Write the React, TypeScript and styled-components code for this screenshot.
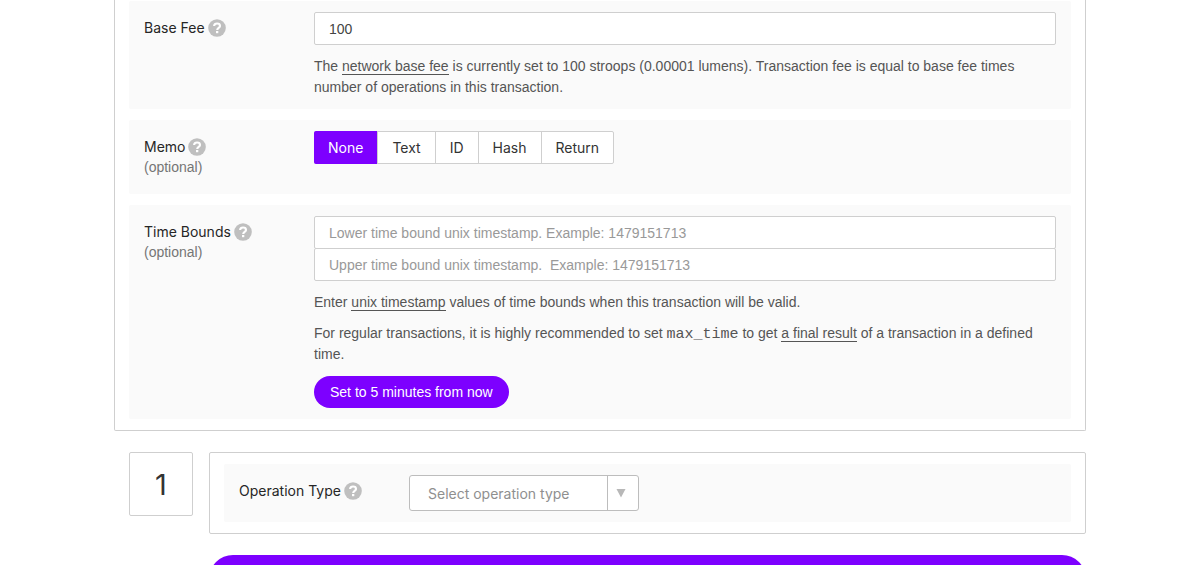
import React, { useState } from "react";
import styled, { createGlobalStyle } from "styled-components";

const color = {
  accent: "#7d00ff",
  border: "#cfcfcf",
  borderStrong: "#bdbdbd",
  row: "#fafafa",
  text: "#262626",
  help: "#555555",
  muted: "#757575",
  placeholder: "#999999",
  icon: "#bfbfbf",
};

const uiFont = `Inter, "Liberation Sans", sans-serif`;

const GlobalStyle = createGlobalStyle`
  *, *::before, *::after { box-sizing: border-box; }
  body {
    margin: 0;
    background: #fff;
    color: ${color.text};
    font-family: "Liberation Sans", Arial, sans-serif;
    font-size: 14px;
    line-height: 21px;
  }
  button, input, select { font: inherit; }
`;

const Page = styled.main`
  height: 100vh;
  overflow: hidden;
`;

const Container = styled.div`
  max-width: 972px;
  margin: 0 auto;
`;

const Panel = styled.section<{ $continued?: boolean }>`
  flex: 1;
  display: flex;
  flex-direction: column;
  gap: 11px;
  padding: ${(p) => (p.$continued ? "1px 14px 11px" : "11px 14px")};
  border: 1px solid ${color.border};
  border-top-width: ${(p) => (p.$continued ? 0 : 1)}px;
  border-radius: ${(p) => (p.$continued ? "0 0 2px 2px" : "2px")};
`;

const Row = styled.div`
  display: flex;
  padding: 11px 15px;
  border-radius: 2px;
  background: ${color.row};
`;

const LabelCell = styled.div`
  flex: 0 0 170px;
  padding: 5px 0;
`;

const LabelLine = styled.div`
  display: flex;
  align-items: center;
  gap: 3px;
  font-family: ${uiFont};
`;

const Optional = styled.div`
  color: ${color.muted};
`;

const Content = styled.div`
  flex: 1;
  min-width: 0;
`;

const HelpButton = styled.button`
  display: flex;
  padding: 0;
  border: 0;
  background: none;
  cursor: pointer;
`;

const TextInput = styled.input`
  display: block;
  width: 100%;
  height: 33px;
  padding: 0 14px;
  border: 1px solid ${color.border};
  border-radius: 2px;
  background: #fff;
  color: #444;
  & + & { margin-top: -1px; }
  &::placeholder { color: ${color.placeholder}; opacity: 1; }
`;

const HelpText = styled.p`
  margin: 11px 0 0;
  color: ${color.help};
  & + & { margin-top: 10px; }
`;

const TextLink = styled.a`
  color: inherit;
  text-decoration: none;
  border-bottom: 1px solid currentColor;
`;

const Code = styled.code`
  font-family: "Liberation Mono", monospace;
  font-size: 15px;
  line-height: 1;
`;

const Segments = styled.div`
  display: inline-flex;
  height: 33px;
  border: 1px solid ${color.border};
  border-radius: 2px;
  background: #fff;
  font-family: ${uiFont};
`;

const Segment = styled.button<{ $active: boolean }>`
  margin: ${(p) => (p.$active ? "-1px 0 -1px -1px" : "0")};
  padding: 0 14px;
  border: 0;
  border-radius: ${(p) => (p.$active ? "2px 0 0 2px" : "0")};
  background: ${(p) => (p.$active ? color.accent : "transparent")};
  color: ${(p) => (p.$active ? "#fff" : "#333")};
  cursor: pointer;
  & + & { border-left: 1px solid ${color.border}; }
`;

const PillButton = styled.button`
  display: block;
  height: 32px;
  margin-top: 11px;
  padding: 0 16px;
  border: 0;
  border-radius: 16px;
  background: ${color.accent};
  color: #fff;
  cursor: pointer;
`;

const Operation = styled.div`
  display: flex;
  align-items: flex-start;
  gap: 16px;
  margin: 21px 0 21px 15px;
`;

const OperationNumber = styled.div`
  display: flex;
  align-items: center;
  justify-content: center;
  width: 64px;
  height: 64px;
  border: 1px solid ${color.border};
  border-radius: 2px;
  color: #333;
  font-family: ${uiFont};
  font-size: 29px;
`;

const SelectBox = styled.div`
  display: grid;
  grid-template-columns: 1fr 31px;
  width: 230px;
  height: 36px;
  border: 1px solid ${color.borderStrong};
  border-radius: 3px;
  background: #fff;
  font-family: ${uiFont};
`;

const Select = styled.select`
  grid-area: 1 / 1 / 2 / 3;
  padding: 0 46px 0 18px;
  border: 0;
  background: none;
  color: #8f8f8f;
  appearance: none;
`;

const SelectArrow = styled.span`
  grid-area: 1 / 2 / 2 / 3;
  display: flex;
  align-items: center;
  padding-left: 8px;
  border-left: 1px solid ${color.borderStrong};
  pointer-events: none;
`;

const AddBar = styled.div`
  display: flex;
  padding-left: 95px;
`;

const AddButton = styled.button`
  flex: 1;
  height: 48px;
  border: 0;
  border-radius: 24px;
  background: ${color.accent};
  cursor: pointer;
`;

function Help({ topic }: { topic: string }) {
  return (
    <HelpButton type="button" aria-label={`Help: ${topic}`}>
      <svg width="18" height="18" viewBox="0 0 18 18" aria-hidden="true">
        <circle cx="9" cy="9" r="8.8" fill={color.icon} />
        <path
          d="M6.100 7.100C6.100 5.400 7.300 4.500 9 4.500c1.800 0 3 .9 3 2.400 0 1.900-2.800 2-2.800 4"
          fill="none"
          stroke="#fff"
          strokeWidth="2.100"
        />
        <rect x="8" y="12" width="2.300" height="2.200" fill="#fff" />
      </svg>
    </HelpButton>
  );
}

function FieldLabel({ text, htmlFor, optional }: { text: string; htmlFor: string; optional?: boolean }) {
  return (
    <LabelCell>
      <LabelLine>
        <label htmlFor={htmlFor}>{text}</label>
        <Help topic={text} />
      </LabelLine>
      {optional && <Optional>(optional)</Optional>}
    </LabelCell>
  );
}

const memoTypes = ["None", "Text", "ID", "Hash", "Return"];

export default function App() {
  const [fee, setFee] = useState("100");
  const [memo, setMemo] = useState("None");
  const [lower, setLower] = useState("");
  const [upper, setUpper] = useState("");

  const setFiveMinutes = () => {
    setLower("0");
    setUpper(String(Math.floor(Date.now() / 1000) + 300));
  };

  return (
    <Page>
      <GlobalStyle />
      <Container>
        <Panel $continued>
          <Row>
            <FieldLabel text="Base Fee" htmlFor="base-fee" />
            <Content>
              <TextInput id="base-fee" value={fee} onChange={(e) => setFee(e.target.value)} />
              <HelpText>
                The <TextLink href="#fees">network base fee</TextLink> is currently set to 100 stroops (0.00001
                lumens). Transaction fee is equal to base fee times number of operations in this transaction.
              </HelpText>
            </Content>
          </Row>
          <Row>
            <FieldLabel text="Memo" htmlFor="memo-None" optional />
            <Content>
              <Segments role="group" aria-label="Memo">
                {memoTypes.map((type) => (
                  <Segment
                    key={type}
                    id={`memo-${type}`}
                    type="button"
                    $active={memo === type}
                    aria-pressed={memo === type}
                    onClick={() => setMemo(type)}
                  >
                    {type}
                  </Segment>
                ))}
              </Segments>
            </Content>
          </Row>
          <Row>
            <FieldLabel text="Time Bounds" htmlFor="lower-bound" optional />
            <Content>
              <TextInput
                id="lower-bound"
                aria-label="Lower time bound"
                placeholder="Lower time bound unix timestamp. Example: 1479151713"
                value={lower}
                onChange={(e) => setLower(e.target.value)}
              />
              <TextInput
                aria-label="Upper time bound"
                placeholder="Upper time bound unix timestamp.  Example: 1479151713"
                value={upper}
                onChange={(e) => setUpper(e.target.value)}
              />
              <HelpText>
                Enter <TextLink href="#timestamp">unix timestamp</TextLink> values of time bounds when this
                transaction will be valid.
              </HelpText>
              <HelpText>
                For regular transactions, it is highly recommended to set <Code>max_time</Code> to get{" "}
                <TextLink href="#result">a final result</TextLink> of a transaction in a defined time.
              </HelpText>
              <PillButton type="button" onClick={setFiveMinutes}>
                Set to 5 minutes from now
              </PillButton>
            </Content>
          </Row>
        </Panel>
        <Operation>
          <OperationNumber>1</OperationNumber>
          <Panel>
            <Row>
              <FieldLabel text="Operation Type" htmlFor="operation-type" />
              <SelectBox>
                <Select id="operation-type" defaultValue="">
                  <option value="">Select operation type</option>
                  <option value="createAccount">Create Account</option>
                  <option value="payment">Payment</option>
                </Select>
                <SelectArrow>
                  <svg width="10" height="10" viewBox="0 0 10 10" aria-hidden="true">
                    <path d="M0.500 1h9L5 9.500z" fill="#b8b8b8" />
                  </svg>
                </SelectArrow>
              </SelectBox>
            </Row>
          </Panel>
        </Operation>
        <AddBar>
          <AddButton type="button" aria-label="Add operation" />
        </AddBar>
      </Container>
    </Page>
  );
}
